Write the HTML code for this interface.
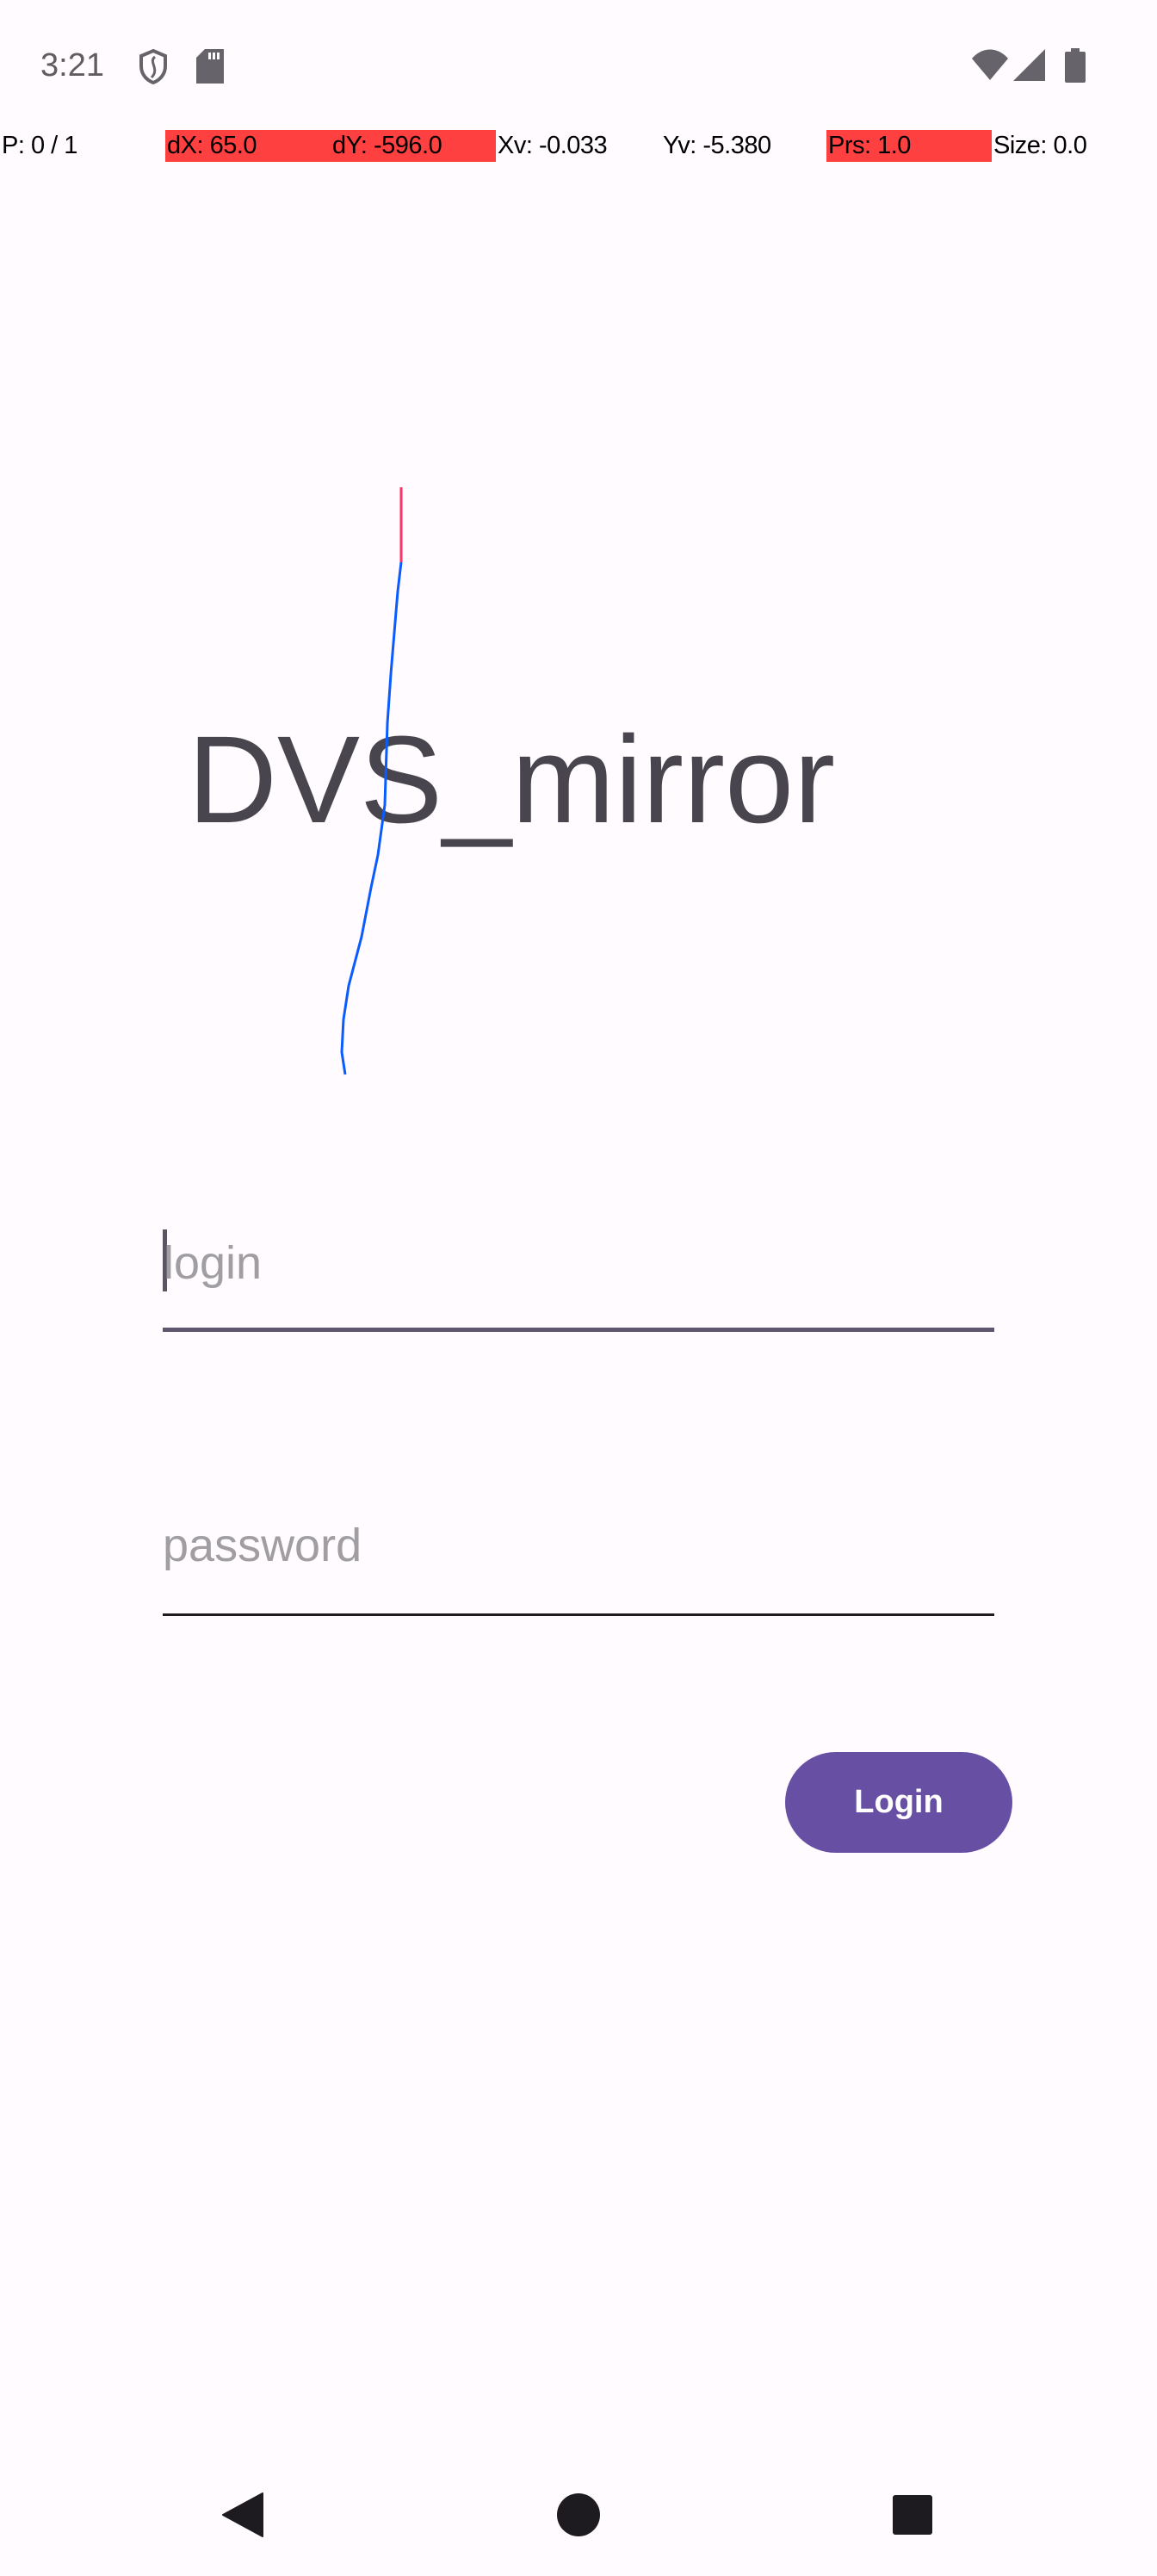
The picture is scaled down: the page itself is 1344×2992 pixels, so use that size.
<!DOCTYPE html>
<html><head><meta charset="utf-8"><style>
*{margin:0;padding:0;box-sizing:border-box}
body{width:1344px;height:2992px;background:#fffbfe;position:relative;overflow:hidden;font-family:"Liberation Sans",sans-serif}
.a{position:absolute;white-space:nowrap}
.dbg{position:absolute;top:151px;height:37px;width:192px;font-size:29px;line-height:37px;color:#000;padding-left:2px;letter-spacing:-0.5px}
.red{background:#ff4040}
</style></head><body>
<div class="a" style="left:47px;top:54px;font-size:38px;color:#5f5d62;line-height:44px">3:21</div>
<svg class="a" style="left:160px;top:56px" width="36" height="42" viewBox="0 0 36 42"><path d="M18 3 L32 9 V21 C32 30 26 37 18 40 C10 37 4 30 4 21 V9 Z" fill="none" stroke="#66646a" stroke-width="4"/><path d="M20 10 C12 16 26 24 16 34" fill="none" stroke="#66646a" stroke-width="3"/></svg>
<svg class="a" style="left:228px;top:57px" width="32" height="40" viewBox="0 0 32 40"><path d="M10 0 H32 V40 H0 V10 Z" fill="#66646a"/><rect x="14" y="4" width="3" height="8" fill="#fff"/><rect x="19" y="4" width="3" height="8" fill="#fff"/><rect x="24" y="4" width="3" height="8" fill="#fff"/></svg>
<svg class="a" style="left:1127px;top:56px" width="46" height="38" viewBox="0 0 46 38"><path d="M2 12 C14 -2 32 -2 44 12 L23 37 Z" fill="#66646a"/></svg>
<svg class="a" style="left:1177px;top:57px" width="38" height="37" viewBox="0 0 38 37"><path d="M37 0 V37 H0 Z" fill="#66646a"/></svg>
<svg class="a" style="left:1237px;top:56px" width="24" height="40" viewBox="0 0 24 40"><rect x="7" y="0" width="10" height="5" fill="#66646a"/><rect x="0" y="4" width="24" height="36" rx="2" fill="#66646a"/></svg>

<div class="dbg" style="left:0">P: 0 / 1</div>
<div class="dbg red" style="left:192px">dX: 65.0</div>
<div class="dbg red" style="left:384px">dY: -596.0</div>
<div class="dbg" style="left:576px">Xv: -0.033</div>
<div class="dbg" style="left:768px">Yv: -5.380</div>
<div class="dbg red" style="left:960px">Prs: 1.0</div>
<div class="dbg" style="left:1152px">Size: 0.0</div>

<div class="a" style="left:218px;top:834px;font-size:144px;line-height:1;color:#49454f">DVS_mirror</div>

<svg class="a" style="left:0;top:0" width="1344" height="1300">
<line x1="466" y1="566" x2="466" y2="653" stroke="#ff3366" stroke-width="3"/>
<polyline points="466,653 462,687 454,783 450,840 447,935 439,993 431,1031 420,1088 405,1145 399,1184 397,1222 401,1248" fill="none" stroke="#0a5cff" stroke-width="3"/>
</svg>

<div class="a" style="left:189px;top:1428px;width:5px;height:72px;background:#5a5566"></div>
<div class="a" style="left:190px;top:1434px;font-size:54px;line-height:66px;color:#a09ea3">login</div>
<div class="a" style="left:189px;top:1542px;width:966px;height:5px;background:#5f5770"></div>
<div class="a" style="left:189px;top:1762px;font-size:54px;line-height:66px;color:#a09ea3">password</div>
<div class="a" style="left:189px;top:1874px;width:966px;height:3px;background:#1d1b20"></div>

<div class="a" style="left:912px;top:2035px;width:264px;height:117px;border-radius:59px;background:#6750a4;color:#fff;font-size:38px;font-weight:bold;line-height:117px;text-align:center">Login</div>

<svg class="a" style="left:0;top:2890px" width="1344" height="64">
<path d="M305 6 V56 L259 31 Z" fill="#1d1b20" stroke="#1d1b20" stroke-width="2" stroke-linejoin="round"/>
<circle cx="672" cy="31" r="25" fill="#1d1b20"/>
<rect x="1037" y="8" width="46" height="46" rx="3" fill="#1d1b20"/>
</svg>
</body></html>
